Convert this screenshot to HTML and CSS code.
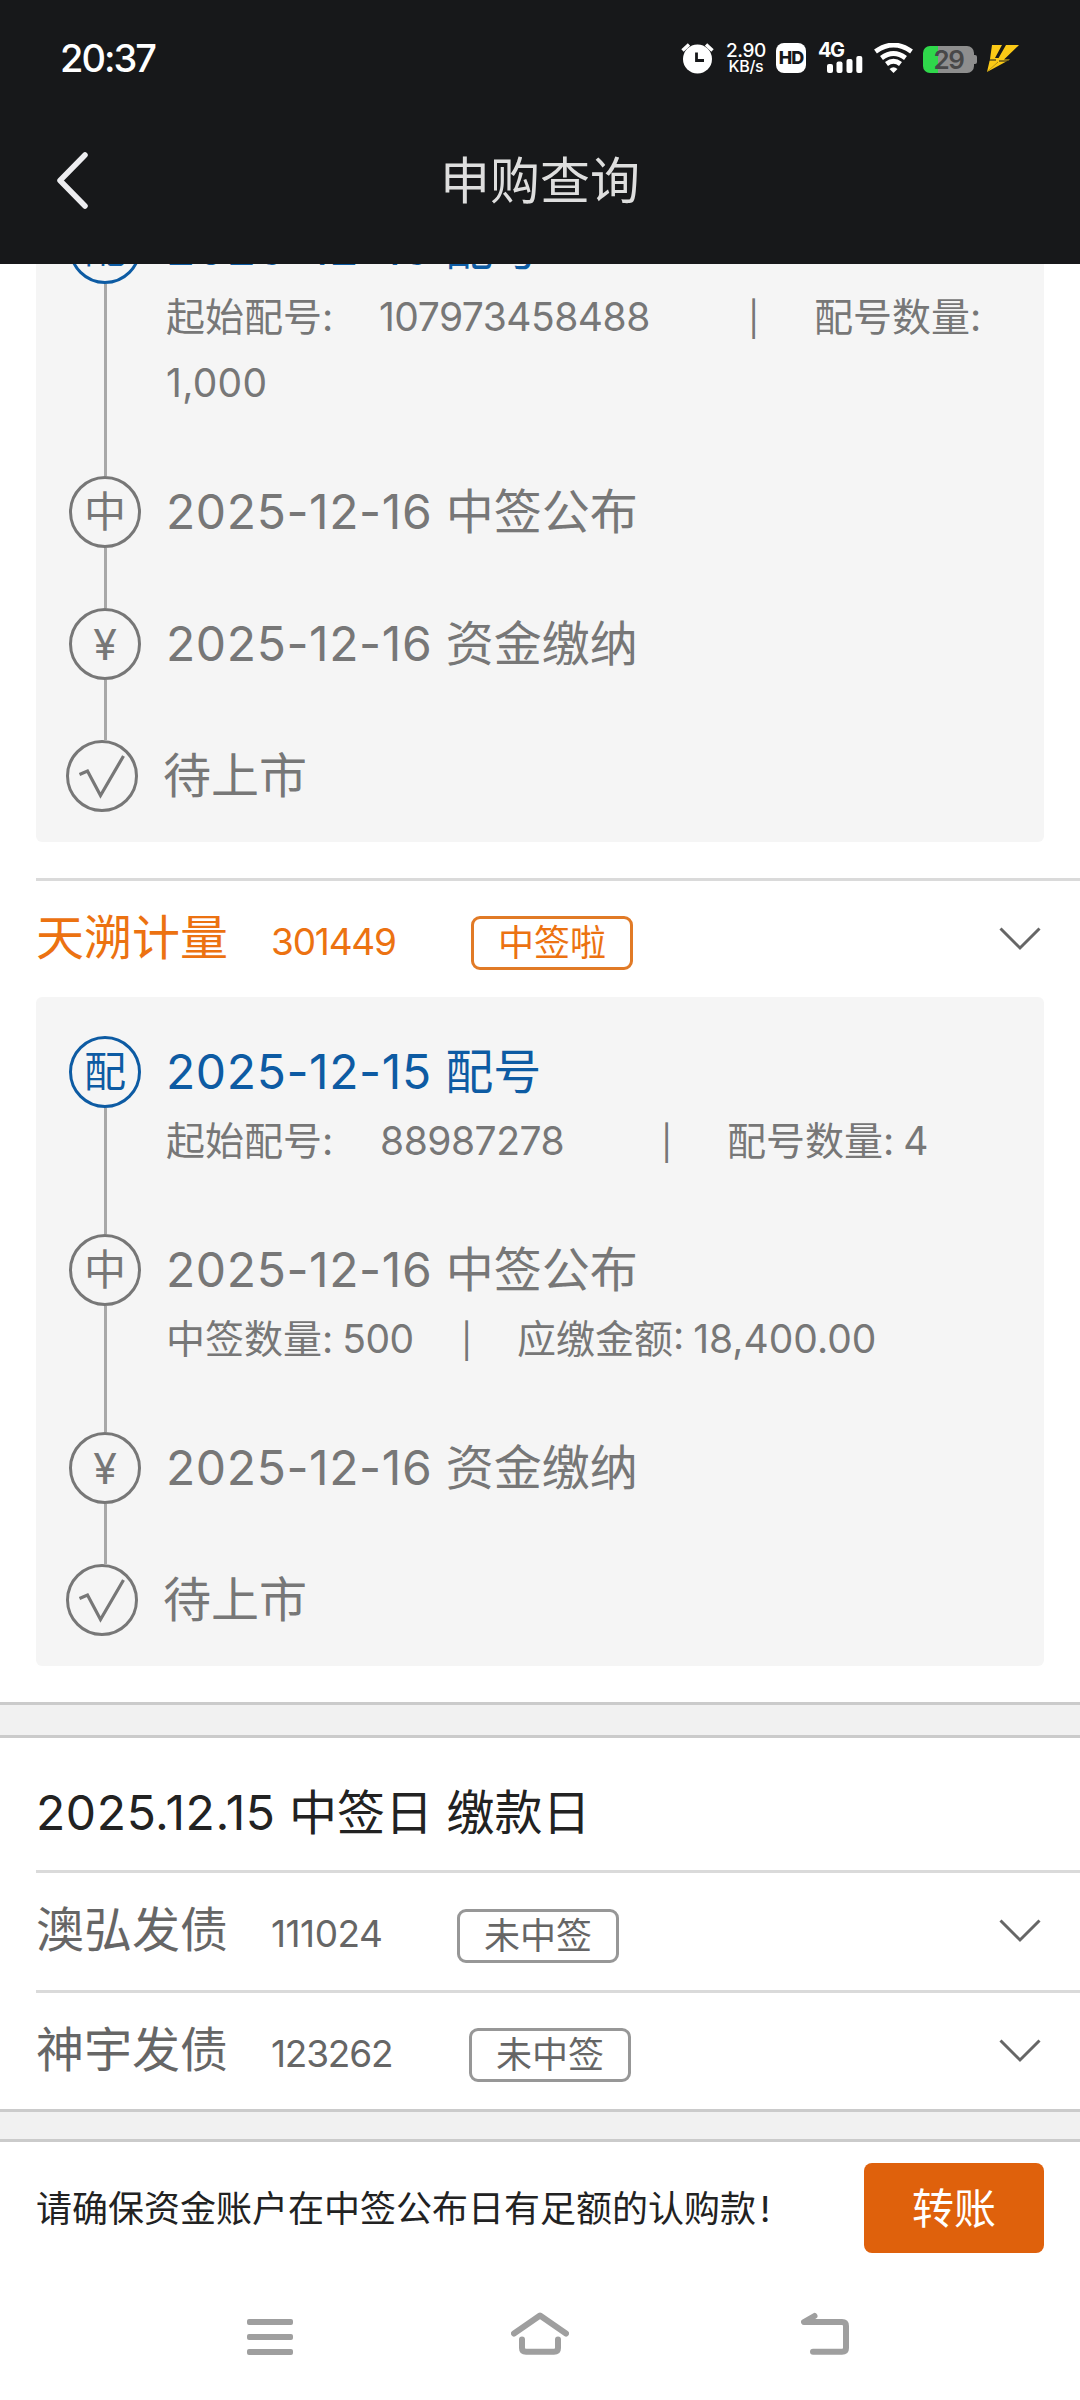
FILE: index.html
```html
<!DOCTYPE html>
<html lang="zh-CN">
<head>
<meta charset="utf-8">
<title>申购查询</title>
<link rel="stylesheet" href="styles.css">
</head>
<body>
<div class="screen">
  <header class="top">
    <div class="status">
      <span class="clock">20:37</span>
      <div class="status-icons">
        <svg class="i-alarm" width="33" height="31" viewBox="0 0 33 31"><circle cx="16.500" cy="16" r="14.500" fill="#fff"/><path d="M1.500 7.500 8 1.500M31.500 7.500 25 1.500" stroke="#fff" stroke-width="3.500"/><path d="M15.500 9.500V17.500H23" fill="none" stroke="#17181a" stroke-width="2.800"/></svg>
        <span class="speed"><b>2.90</b><i>KB/s</i></span>
        <span class="hd">HD</span>
        <span class="cell"><b>4G</b><svg width="36" height="17" viewBox="0 0 36 17" fill="#fff"><rect x="0" y="8" width="6" height="9" rx="2"/><rect x="9.500" y="5.500" width="6" height="11.500" rx="2"/><rect x="19.500" y="3" width="6" height="14" rx="2"/><rect x="29.300" y="0" width="6" height="17" rx="2"/></svg></span>
        <svg class="i-wifi" width="39" height="30" viewBox="0 0 39 30" fill="none" stroke="#fff" stroke-width="4.800"><path d="M1.500 8.500Q19.500-4.500 37.500 8.500"/><path d="M7.500 15Q19.500 6 31.500 15"/><path d="M12.500 21Q19.500 15.500 26.500 21"/><path d="M15.500 26Q19.500 22.500 23.500 26L19.500 30Z" fill="#fff" stroke="none"/></svg>
        <span class="battery"><span class="cap">29</span></span>
        <svg class="i-bolt" width="33" height="28" viewBox="0 0 33 28" fill="#fbc916"><path d="M6 0H16L9 13H16L1 27L4 14Z"/><path d="M20 0H33L18 14.500H24L1 27L12 17L12 14Z"/><path d="M2.500 15H10M13 16H22" stroke="#17181a" stroke-width="1"/></svg>
      </div>
    </div>
    <div class="titlebar">
      <svg class="back" width="34" height="60" viewBox="0 0 34 60"><path d="M29 4 4 29.500 29 55" fill="none" stroke="#ededf0" stroke-width="5.500" stroke-linecap="round" stroke-linejoin="round"/></svg>
      <h1>申购查询</h1>
    </div>
  </header>

  <main class="list">
    <section class="card card-first">
      <div class="step active"><div class="rail"><span class="dot">配</span></div><div class="body"><h3><span class="date">2025-12-15</span> 配号</h3><p><span class="label">起始配号:</span><span class="num long">107973458488</span><span class="bar">|</span>配号数量:<br><span class="num thousand">1,000</span></p></div></div>
      <div class="step"><div class="rail"><span class="dot">中</span></div><div class="body"><h3><span class="date">2025-12-16</span> 中签公布</h3></div></div>
      <div class="step"><div class="rail"><span class="dot yen">¥</span></div><div class="body"><h3><span class="date">2025-12-16</span> 资金缴纳</h3></div></div>
      <div class="step last"><div class="rail"><span class="dot"><svg width="72" height="72" viewBox="0 0 72 72"><path d="M13.500 34.500 21.500 31 34.500 55.500 57.500 16" fill="none" stroke="#777" stroke-width="3.200"/></svg></span></div><div class="body"><h3>待上市</h3></div></div>
    </section>

    <div class="row won">
      <span class="name">天溯计量</span><span class="code c1">301449</span><span class="badge">中签啦</span>
      <svg class="chev" width="42" height="24" viewBox="0 0 42 24"><path d="M1.500 1.500 21 21 40.500 1.500"/></svg>
    </div>

    <section class="card">
      <div class="step active"><div class="rail"><span class="dot">配</span></div><div class="body"><h3><span class="date">2025-12-15</span> 配号</h3><p><span class="label label-wide">起始配号:</span><span class="num short">88987278</span><span class="bar">|</span>配号数量: <span class="num">4</span></p></div></div>
      <div class="step"><div class="rail"><span class="dot">中</span></div><div class="body"><h3><span class="date">2025-12-16</span> 中签公布</h3><p><span class="count">中签数量: <span class="num">500</span></span><span class="bar near">|</span>应缴金额: <span class="amount">18,400.00</span></p></div></div>
      <div class="step"><div class="rail"><span class="dot yen">¥</span></div><div class="body"><h3><span class="date">2025-12-16</span> 资金缴纳</h3></div></div>
      <div class="step last"><div class="rail"><span class="dot"><svg width="72" height="72" viewBox="0 0 72 72"><path d="M13.500 34.500 21.500 31 34.500 55.500 57.500 16" fill="none" stroke="#777" stroke-width="3.200"/></svg></span></div><div class="body"><h3>待上市</h3></div></div>
    </section>

    <div class="band"></div>
    <h2 class="day"><span class="date">2025.12.15</span> 中签日 缴款日</h2>
    <div class="row">
      <span class="name">澳弘发债</span><span class="code c2">111024</span><span class="badge">未中签</span>
      <svg class="chev" width="42" height="24" viewBox="0 0 42 24"><path d="M1.500 1.500 21 21 40.500 1.500"/></svg>
    </div>
    <div class="row">
      <span class="name">神宇发债</span><span class="code c3">123262</span><span class="badge">未中签</span>
      <svg class="chev" width="42" height="24" viewBox="0 0 42 24"><path d="M1.500 1.500 21 21 40.500 1.500"/></svg>
    </div>
    <div class="band band-end"></div>
  </main>

  <footer class="notice">
    <p>请确保资金账户在中签公布日有足额的认购款<span class="mark">!</span></p>
    <button class="transfer" type="button">转账</button>
  </footer>

  <nav class="sysnav">
    <svg class="menu" width="46" height="36" viewBox="0 0 46 36" fill="#9f9f9f"><rect width="46" height="6" rx="2"/><rect y="15" width="46" height="6" rx="2"/><rect y="30" width="46" height="6" rx="2"/></svg>
    <svg class="home" width="58" height="44" viewBox="0 0 58 44" fill="none" stroke="#9f9f9f" stroke-width="6" stroke-linecap="round" stroke-linejoin="round"><path d="M3 21.500 29 3.500 55 21.500"/><path d="M11 27.500V36Q11 39.800 15 39.800H43Q47 39.800 47 36V27.500"/></svg>
    <svg width="50" height="44" viewBox="0 0 50 44" fill="none" stroke="#9f9f9f" stroke-width="6" stroke-linecap="round" stroke-linejoin="round"><path d="M13.500 4 3 10H41Q45 10 45 14V36Q45 39.800 41 39.800H12"/></svg>
  </nav>
</div>
</body>
</html>
```
FILE: styles.css
```css
* { box-sizing: border-box; }
body { margin: 0; background: #fff; font-family: Inter, "Noto Sans CJK SC", sans-serif; color: #777; }
h1, h2, h3, p { margin: 0; font-weight: 400; }
svg { display: block; flex: none; }
.screen { width: 1080px; height: 2400px; display: flex; flex-direction: column; overflow: hidden; background: #fff; }

.top { height: 264px; flex: none; background: #17181a; color: #fff; }
.status { height: 116px; padding: 0 61px 0 60px; display: flex; align-items: center; justify-content: space-between; }
.clock { font-size: 38px; font-weight: 500; letter-spacing: -2px; }
.status-icons { display: flex; align-items: center; }
.i-alarm { margin-right: 12px; }
.speed { width: 40px; display: flex; flex-direction: column; align-items: center; }
.speed b { font-size: 19px; line-height: 17px; font-weight: 500; letter-spacing: -.4px; }
.speed i { font-size: 16px; line-height: 15px; font-style: normal; font-weight: 500; letter-spacing: -.3px; }
.hd { width: 30px; height: 30px; margin: 0 12px 0 10px; border-radius: 8px; background: #fff; color: #17181a; font-size: 18px; line-height: 30px; font-weight: 800; text-align: center; letter-spacing: -1px; }
.cell { width: 45px; height: 30px; margin-right: 11px; display: flex; flex-direction: column; }
.cell b { font-size: 20px; line-height: 14px; font-weight: 700; letter-spacing: -1.5px; }
.cell svg { margin-left: 9px; margin-top: -1px; }
.i-wifi { margin-right: 10px; }
.battery { position: relative; width: 51px; height: 27px; margin-right: 12px; margin-top: 2px; border-radius: 7px; background: linear-gradient(90deg, #2fd84b 15px, #8e8e8e 15px); color: #484848; text-align: center; font-size: 26px; line-height: 27px; font-weight: 600; letter-spacing: -1.5px; }
.battery::after { content: ""; position: absolute; right: -3px; top: 9px; width: 3px; height: 9px; border-radius: 0 2px 2px 0; background: #8e8e8e; }
.i-bolt { margin-top: 2px; }
.titlebar { height: 130px; display: grid; grid-template-columns: 120px 1fr 120px; align-items: center; }
.back { margin-left: 56px; }
h1 { font-size: 50px; line-height: 64px; color: #dedede; text-align: center; }

.list { flex: none; height: 1878px; overflow: hidden; }
.card { margin: 0 36px; padding: 39px 33px 30px; border-radius: 6px; background: #f5f5f5; }
.card-first { margin-top: -91px; }
.step { display: flex; min-height: 132px; }
.step.last { min-height: 72px; margin-left: -3px; }
.rail { width: 72px; margin-right: 25px; display: flex; flex-direction: column; flex: none; }
.rail::after { content: ""; flex: 1; width: 3px; margin-left: 35px; background: #a8a8a8; }
.dot { width: 72px; height: 72px; flex: none; border: 3px solid #777; border-radius: 50%; font-size: 42px; line-height: 66px; text-align: center; }
.dot svg { margin: -3px; }
.dot.yen { font-size: 43px; line-height: 67px; }
.last .rail::after { display: none; }
.body { padding-bottom: 60px; white-space: pre; }
.last .body { padding-bottom: 0; }
h3 { font-size: 48px; line-height: 72px; }
.active h3, .active .dot { color: #0d5ba3; border-color: #0d5ba3; }
.body p { font-size: 39px; line-height: 66px; word-spacing: -2px; }
.date { letter-spacing: .6px; }
.num { letter-spacing: -.5px; }
.thousand { letter-spacing: .3px; }
.amount { letter-spacing: 0; }
.label { display: inline-block; width: 213px; }
.label-wide { width: 214px; }
.long { display: inline-block; width: 369px; }
.short { display: inline-block; width: 281px; }
.count { display: inline-block; width: 295px; }
.bar { display: inline-block; width: 66px; font-size: 34px; line-height: 40px; }
.bar.near { width: 56px; }

.row { height: 117px; margin-left: 36px; padding-right: 39px; display: flex; align-items: center; color: #666; }
.row + .row { height: 119px; border-top: 3px solid #dadada; }
.row.won { height: 119px; margin-top: 36px; border-top: 3px solid #dadada; color: #ec7211; }
.name { width: 235px; font-size: 48px; line-height: 60px; margin-bottom: 3px; }
.code { font-size: 37px; letter-spacing: -1.2px; margin-top: 4px; }
.c1 { width: 200px; }
.c2 { width: 186px; letter-spacing: -.5px; }
.c3 { width: 198px; }
.badge { width: 162px; height: 54px; margin-top: 8px; border: 3px solid #979797; border-radius: 9px; font-size: 36px; line-height: 48px; text-align: center; }
.won .badge { border-color: #e17a26; }
.chev { margin-left: auto; margin-bottom: 1px; fill: none; stroke: #666; stroke-width: 3px; }

.band { height: 36px; margin-top: 36px; border: solid #cbcbcb; border-width: 3px 0; background: #f1f1f1; }
.band-end { height: 33px; margin-top: 0; }
.day { height: 135px; margin-left: 36px; border-bottom: 3px solid #dadada; font-size: 48px; line-height: 149px; color: #222; white-space: pre; }

.notice { height: 132px; flex: none; padding: 0 36px; display: flex; align-items: center; justify-content: space-between; color: #222; font-size: 36px; }
.notice p { margin-bottom: 4px; }
.mark { margin-left: 4px; }
.transfer { width: 180px; height: 90px; padding: 0 0 5px; border: 0; border-radius: 8px; background: #df610c; color: #fff; font: inherit; font-size: 42px; }
.sysnav { flex: 1; padding: 38px 0 0 247px; display: flex; align-items: flex-start; }
.menu { margin: 7px 218px 0 0; }
.home { margin-right: 232px; }
```
